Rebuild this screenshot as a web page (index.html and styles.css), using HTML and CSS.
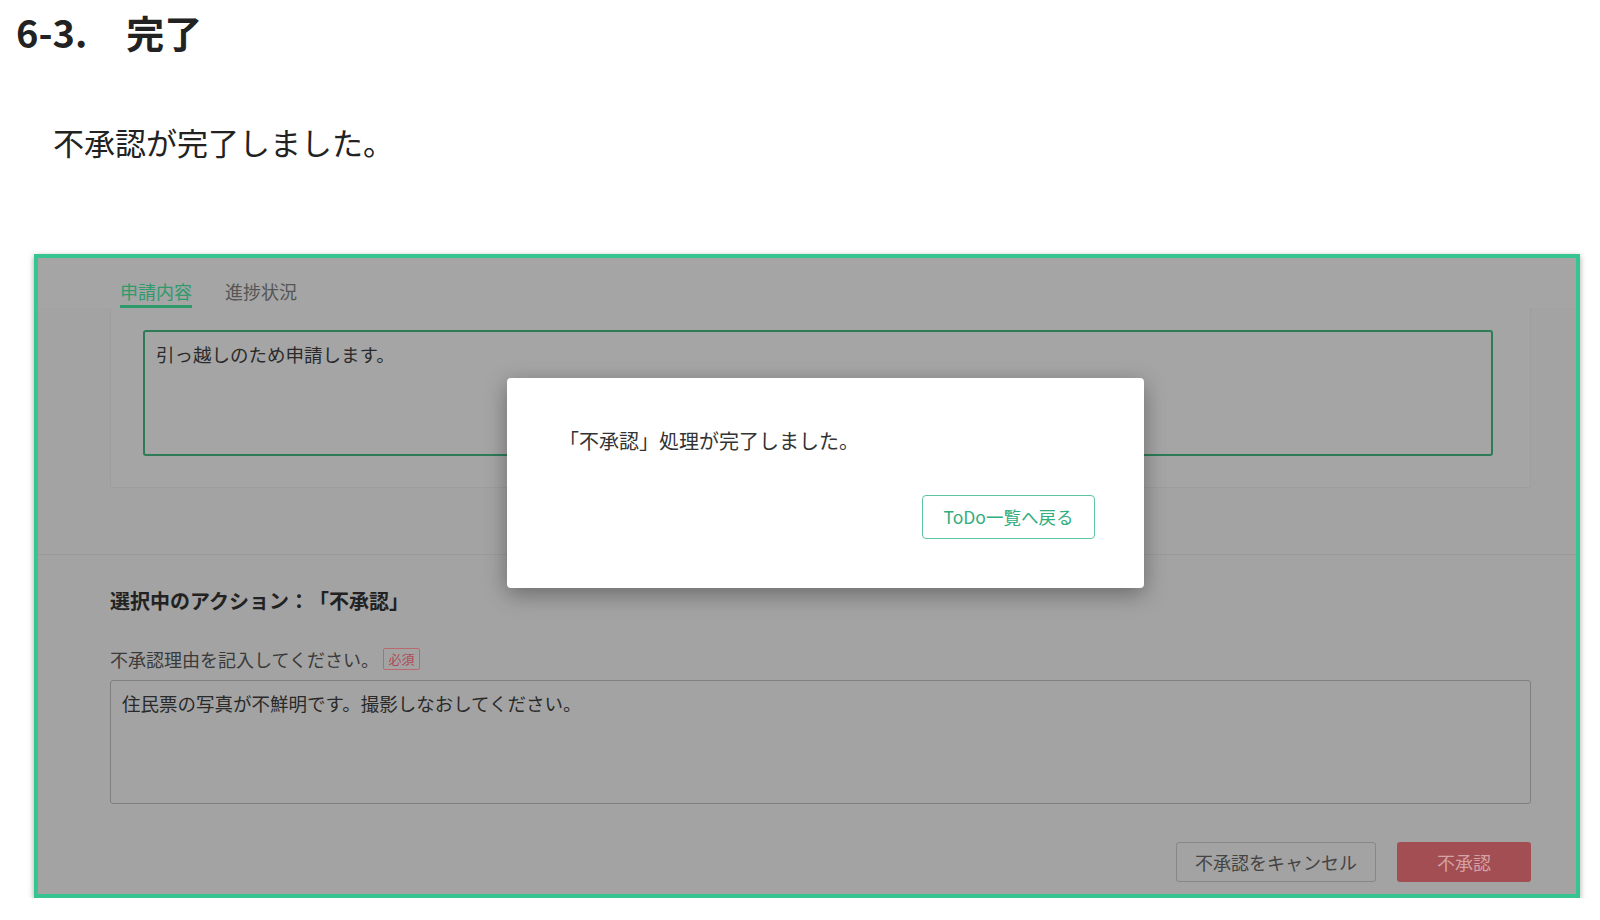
FILE: index.html
```html
<!DOCTYPE html>
<html lang="ja">
    <head>
        <meta charset="utf-8">
        <title>6-3. 完了</title>
        <link rel="stylesheet" href="styles.css">
    </head>
    <body>
        <div class="page">
            <h1 class="title"><span class="num">6-3.</span>完了</h1>
            <p class="lead">不承認が完了しました。</p>

            <div class="shot">
                <div class="tabs">
                    <div class="tab active">申請内容</div>
                    <div class="tab">進捗状況</div>
                </div>

                <div class="card">
                    <div class="box green">引っ越しのため申請します。</div>
                </div>

                <div class="action">
                    <div class="actionTitle">選択中のアクション：「不承認」</div>
                    <div class="label">不承認理由を記入してください。<span class="req">必須</span></div>
                    <div class="box reason">住民票の写真が不鮮明です。撮影しなおしてください。</div>
                    <div class="btns">
                        <div class="btn cancel">不承認をキャンセル</div>
                        <div class="btn reject">不承認</div>
                    </div>
                </div>

                <div class="dialog">
                    <p class="msg">「不承認」処理が完了しました。</p>
                    <div class="dlgBtns">
                        <div class="back">ToDo一覧へ戻る</div>
                    </div>
                </div>
            </div>
        </div>
    </body>
</html>
```
FILE: styles.css
```css
body {
    margin: 0;
    background: #fff;
    color: #222;
    font-family: "Noto Sans CJK JP", "Noto Sans", sans-serif;
    text-spacing-trim: space-all;
}

.page {padding: 0 16px;}

.title {
    margin: 7px 0 0;
    font-size: 38px;
    line-height: 50px;
    font-weight: 700;
    color: #222;
}
.title .num {margin-right: 39px;}

.lead {
    margin: 65px 0 0 37px;
    font-size: 31px;
    line-height: 40px;
    color: #222;
}

/* screenshot frame */
.shot {
    position: relative;
    margin: 92px 0 0 18px;
    width: 1538px;
    border: 4px solid #36c490;
    background: #a3a3a3;
    box-shadow: 0 2px 6px rgba(0, 0, 0, 0.35);
}

.tabs {
    display: flex;
    align-items: flex-end;
    gap: 33px;
    height: 50px;
    padding-left: 82px;
    background: #a5a5a5;
}
.tab {
    font-size: 18px;
    line-height: 26px;
    padding-bottom: 1px;
    color: #555;
    border-bottom: 3px solid transparent;
}
.tab.active {color: #2f9a6b; border-bottom-color: #2f9a6b;}

.card {
    margin: 0 45px 0 72px;
    padding: 22px 37px 31px 32px;
    background: #a5a5a5;
    border: 1px solid #9e9e9e;
    border-top: none;
}

.box {
    font-size: 18.5px;
    line-height: 24px;
    color: #2a2a2a;
    border-radius: 3px;
}
.box.green {
    height: 102px;
    padding: 10px 11px;
    border: 2px solid #2e7b58;
}

.action {
    margin-top: 66px;
    padding: 32px 45px 12px 72px;
    border-top: 1px solid #9a9a9a;
}
.actionTitle {
    font-size: 20px;
    line-height: 28px;
    font-weight: 700;
    color: #222;
}
.label {
    display: flex;
    align-items: center;
    margin-top: 30px;
    font-size: 18px;
    line-height: 28px;
    color: #3a3a3a;
}
.req {
    margin-left: 4px;
    width: 35px;
    height: 20px;
    border: 1px solid #b96a70;
    border-radius: 2px;
    font-size: 13px;
    line-height: 20px;
    text-align: center;
    color: #b04a56;
}
.box.reason {
    margin-top: 7px;
    height: 102px;
    padding: 10px 11px;
    border: 1px solid #7f7f7f;
}

.btns {
    display: flex;
    justify-content: flex-end;
    gap: 21px;
    margin-top: 38px;
}
.btn {
    height: 40px;
    font-size: 18px;
    line-height: 40px;
    text-align: center;
    border-radius: 3px;
    box-sizing: border-box;
}
.btn.cancel {
    width: 200px;
    border: 1px solid #878787;
    line-height: 38px;
    color: #444;
}
.btn.reject {
    width: 134px;
    background: #a34e52;
    color: #d4a2a4;
}

/* modal */
.dialog {
    position: absolute;
    left: 469px;
    top: 120px;
    width: 637px;
    box-sizing: border-box;
    padding: 49px 49px 49px 52px;
    background: #fff;
    border-radius: 4px;
    box-shadow: 0 6px 22px rgba(0, 0, 0, 0.35);
}
.msg {
    margin: 0;
    font-size: 20px;
    line-height: 28px;
    color: #333;
}
.dlgBtns {
    display: flex;
    justify-content: flex-end;
    margin-top: 40px;
}
.back {
    width: 173px;
    height: 44px;
    box-sizing: border-box;
    border: 1px solid #5cc59e;
    border-radius: 4px;
    font-size: 17.5px;
    line-height: 42px;
    text-align: center;
    color: #2fae7e;
}
```
